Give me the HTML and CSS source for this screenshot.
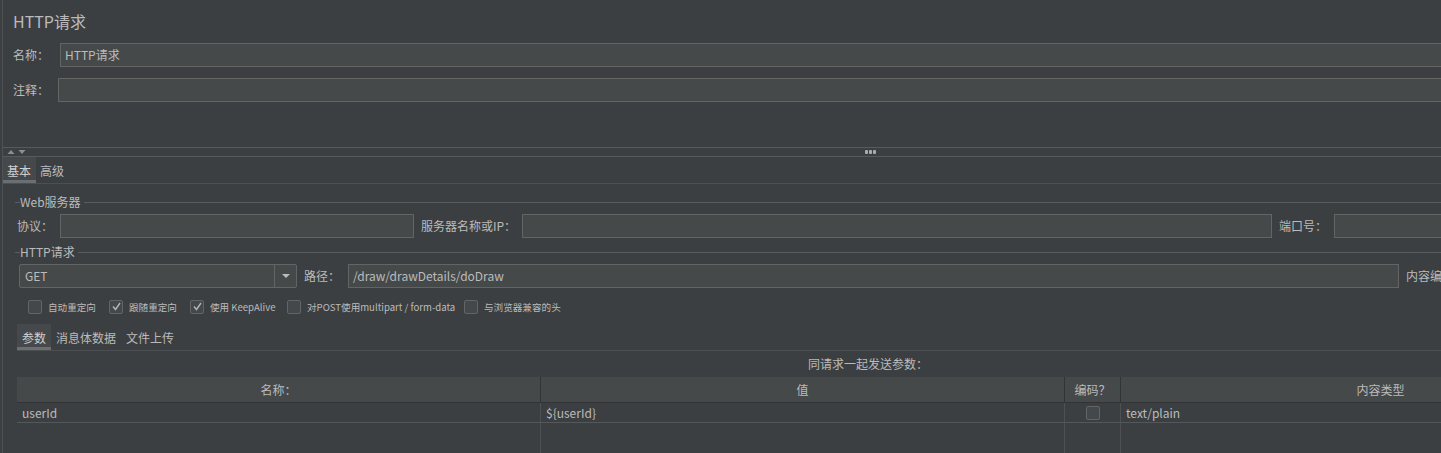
FILE: index.html
```html
<!DOCTYPE html>
<html lang="zh">
<head>
<meta charset="utf-8">
<title>HTTP请求</title>
<link rel="stylesheet" href="styles.css">
</head>
<body>
<div class="app">
  <div class="panel">
    <section class="top">
      <div class="title">HTTP请求</div>
      <div class="frow frow-name">
        <label class="lbl lbl-name">名称：</label>
        <div class="input input-flex">HTTP请求</div>
      </div>
      <div class="frow frow-comment">
        <label class="lbl lbl-comment">注释：</label>
        <div class="input input-flex"></div>
      </div>
    </section>

    <div class="splitter">
      <span class="arrows">
        <svg width="20" height="6" viewBox="0 0 20 6"><path d="M1.5 5 L5 1 L8.5 5 Z" fill="#8c8f91"/><path d="M12.5 1 L19.5 1 L16 5 Z" fill="#8c8f91"/></svg>
      </span>
      <span class="dots"><i></i><i></i><i></i></span>
    </div>

    <div class="tabs">
      <div class="tab active">基本</div>
      <div class="tab">高级</div>
    </div>

    <div class="content">
      <div class="group-title"><span>Web服务器</span></div>
      <div class="frow frow-server">
        <label class="lbl lbl-proto">协议：</label>
        <div class="input input-proto"></div>
        <label class="lbl lbl-host">服务器名称或IP：</label>
        <div class="input input-host"></div>
        <label class="lbl lbl-port">端口号：</label>
        <div class="input input-flex"></div>
      </div>

      <div class="group-title group-http"><span>HTTP请求</span></div>
      <div class="frow frow-path">
        <div class="combo">
          <span class="combo-value">GET</span>
          <span class="combo-btn">
            <svg width="10" height="6" viewBox="0 0 10 6"><path d="M1 1 L9 1 L5 5 Z" fill="#bbbbbb"/></svg>
          </span>
        </div>
        <label class="lbl lbl-path">路径：</label>
        <div class="input input-path">/draw/drawDetails/doDraw</div>
        <label class="lbl lbl-enc">内容编码：</label>
        <div class="input input-flex"></div>
      </div>

      <div class="checks">
        <div class="chk chk-1"><span class="box"></span><span class="ctext">自动重定向</span></div>
        <div class="chk chk-2"><span class="box checked"><svg width="11" height="11" viewBox="0 0 11 11"><path d="M2 5.5 L4.5 8.5 L9 2" fill="none" stroke="#b4b4b4" stroke-width="1.4"/></svg></span><span class="ctext">跟随重定向</span></div>
        <div class="chk chk-3"><span class="box checked"><svg width="11" height="11" viewBox="0 0 11 11"><path d="M2 5.5 L4.5 8.5 L9 2" fill="none" stroke="#b4b4b4" stroke-width="1.4"/></svg></span><span class="ctext">使用 KeepAlive</span></div>
        <div class="chk chk-4"><span class="box"></span><span class="ctext">对POST使用multipart / form-data</span></div>
        <div class="chk chk-5"><span class="box"></span><span class="ctext">与浏览器兼容的头</span></div>
      </div>

      <div class="subtabs">
        <div class="subtab active">参数</div>
        <div class="subtab">消息体数据</div>
        <div class="subtab">文件上传</div>
      </div>

      <div class="caption">同请求一起发送参数：</div>

      <div class="table">
        <div class="th">名称：</div>
        <div class="th">值</div>
        <div class="th">编码？</div>
        <div class="th">内容类型</div>

        <div class="td">userId</div>
        <div class="td">${userId}</div>
        <div class="td td-center"><span class="box"></span></div>
        <div class="td">text/plain</div>

        <div class="te"></div>
        <div class="te"></div>
        <div class="te"></div>
        <div class="te"></div>
      </div>
    </div>
  </div>
</div>
</body>
</html>
```

FILE: styles.css
```css
html, body {
  margin: 0;
  padding: 0;
}
body {
  width: 1441px;
  height: 453px;
  overflow: hidden;
  background: #3c3f41;
  color: #bbbbbb;
  font-family: "Noto Sans CJK SC", "Noto Sans", sans-serif;
  font-size: 12px;
}
.app {
  margin-left: 2px;
  border-left: 1px solid #4f5254;
  height: 453px;
  overflow: hidden;
}
.panel {
  width: 1736px;
}

/* top */
.top {
  height: 147px;
  padding-left: 10px;
  box-sizing: border-box;
}
.title {
  height: 43px;
  font-size: 16px;
  line-height: 43px;
}
.frow {
  display: flex;
  align-items: center;
  height: 24px;
}
.frow-comment {
  margin-top: 11px;
}
.lbl {
  flex: none;
  white-space: nowrap;
  line-height: 24px;
}
.lbl-name { width: 47px; }
.lbl-comment { width: 45px; }
.input {
  box-sizing: border-box;
  height: 24px;
  background: #45494a;
  border: 1px solid #646464;
  padding: 0 4px;
  line-height: 22px;
  white-space: nowrap;
  overflow: hidden;
}
.input-flex { flex: 1; min-width: 0; }

/* splitter */
.splitter {
  height: 8px;
  border-top: 1px solid #575a5c;
  border-bottom: 1px solid #575a5c;
  display: flex;
  align-items: center;
}
.arrows {
  display: flex;
  margin-left: 3px;
  width: 20px;
}
.dots {
  display: flex;
  gap: 1px;
  margin-left: 839px;
}
.dots i {
  display: block;
  width: 3px;
  height: 4px;
  border-radius: 1px;
  background: #a9abad;
}

/* tabs */
.tabs {
  display: flex;
  height: 26px;
  border-bottom: 1px solid #4d5052;
}
.tab {
  box-sizing: border-box;
  padding: 0 5px 0 4px;
  line-height: 27px;
  font-size: 12px;
}
.tab.active {
  background: #45494b;
  border-bottom: 3px solid #6c6f71;
  color: #d0d0d0;
}

/* content */
.content {
  padding-left: 12px;
}
.group-title {
  display: flex;
  align-items: center;
  height: 14px;
  margin-top: 11px;
}
.group-title::before {
  content: "";
  width: 5px;
  border-top: 1px solid #5a5d5f;
}
.group-title::after {
  content: "";
  flex: 1;
  border-top: 1px solid #5a5d5f;
  margin-left: 3px;
}
.group-title span {
  line-height: 14px;
  white-space: nowrap;
}
.group-http {
  margin-top: 7px;
}
.frow-server {
  margin-top: 5px;
  padding-left: 2px;
}
.lbl-proto { width: 43px; }
.input-proto { width: 354px; flex: none; }
.lbl-host { width: 101px; margin-left: 7px; }
.input-host { width: 750px; flex: none; }
.lbl-port { width: 55px; margin-left: 7px; }

.frow-path {
  margin-top: 5px;
  padding-left: 4px;
}
.combo {
  box-sizing: border-box;
  flex: none;
  width: 278px;
  height: 24px;
  display: flex;
  background: #45494a;
  border: 1px solid #646464;
  border-radius: 2px;
}
.combo-value {
  flex: 1;
  padding-left: 5px;
  line-height: 22px;
}
.combo-btn {
  width: 21px;
  border-left: 1px solid #646464;
  display: flex;
  align-items: center;
  justify-content: center;
}
.lbl-path { width: 44px; margin-left: 7px; }
.input-path { width: 1051px; flex: none; }
.lbl-enc { margin-left: 7px; margin-right: 7px; }

/* checkboxes */
.checks {
  display: flex;
  align-items: center;
  height: 13px;
  margin-top: 12px;
  padding-left: 13px;
  font-size: 9.6px;
}
.chk {
  display: flex;
  align-items: center;
  flex: none;
}
.chk-1, .chk-2 { width: 81px; }
.chk-3 { width: 97px; }
.chk-4 { width: 177px; }
.box {
  box-sizing: border-box;
  flex: none;
  width: 14px;
  height: 14px;
  border: 1px solid #646464;
  border-radius: 2px;
  background: #43494a;
  display: inline-flex;
  align-items: center;
  justify-content: center;
}
.ctext {
  margin-left: 6px;
  white-space: nowrap;
}

/* sub tabs */
.subtabs {
  display: flex;
  height: 26px;
  margin-top: 11px;
  margin-left: 2px;
  border-bottom: 1px solid #4d5052;
}
.subtab {
  box-sizing: border-box;
  padding: 0 5px;
  line-height: 27px;
  font-size: 12px;
}
.subtab.active {
  background: #45494b;
  border-bottom: 3px solid #6c6f71;
  color: #d0d0d0;
}

.caption {
  height: 26px;
  line-height: 26px;
  padding-left: 793px;
}

/* table */
.table {
  display: grid;
  grid-template-columns: 524px 524px 56px 520px;
  grid-template-rows: 26px 20px 40px;
  margin-left: 2px;
}
.th {
  box-sizing: border-box;
  background: #45494a;
  border-right: 1px solid #323436;
  border-bottom: 1px solid #313335;
  text-align: center;
  line-height: 25px;
}
.td {
  box-sizing: border-box;
  border-right: 1px solid #4e5153;
  border-bottom: 1px solid #55585a;
  padding-left: 5px;
  line-height: 19px;
  white-space: nowrap;
}
.td-center {
  padding-left: 0;
  display: flex;
  justify-content: center;
  align-items: center;
}
.te {
  border-right: 1px solid #4e5153;
}
```
